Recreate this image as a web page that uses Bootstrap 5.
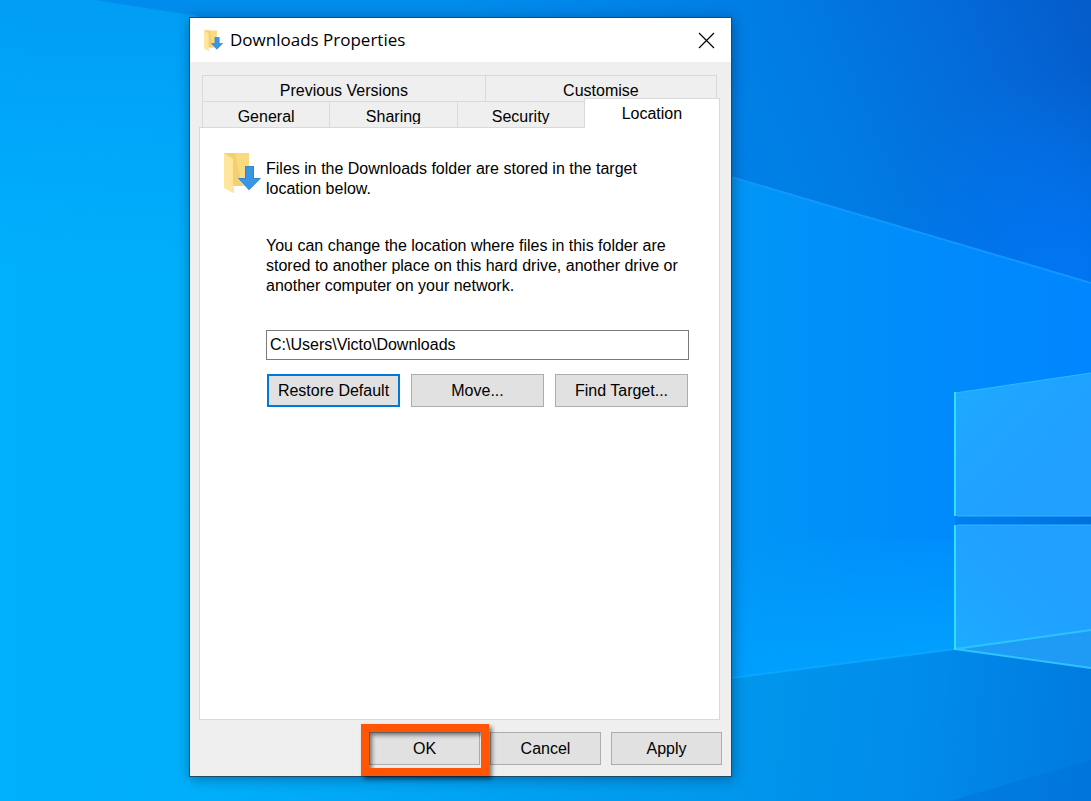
<!DOCTYPE html>
<html lang="en">
<head>
<meta charset="utf-8">
<meta name="viewport" content="width=device-width, initial-scale=1">
<title>Downloads Properties</title>
<link href="https://cdn.jsdelivr.net/npm/bootstrap@5.3.0/dist/css/bootstrap.min.css" rel="stylesheet">
<style>
  body { font-family: "Liberation Sans", Arial, sans-serif; font-size: 16px; line-height: 20px; color: #000; background: #00a8fb; }
  .desktop { padding: 17px 0 24px 189px; }
  .wallpaper { inset: 0; z-index: 0; }
  .dialog { z-index: 1; width: 100%; max-width: 543px; background: #efefef; border: 1px solid #1c4a68; box-shadow: 1px 2px 12px rgba(0,30,60,.42); }
  .titlebar { height: 44px; padding: 0 16px 0 14px; background: #fff; }
  .titlebar h1 { font-family: "Open Sans", "Noto Sans", sans-serif; font-size: 17px; line-height: 24px; margin-left: 7px; }
  .close-btn { line-height: 0; }
  .sheet { padding: 13px 11px 0 9px; }
  .tab-row { padding-left: 3px; }
  .tab-row.upper { padding-right: 3px; }
  .tab-btn { flex: 128 1 0; height: 26px; padding: 5px 0 0; background: #efefef; color: #000; border: solid #d9d9d9; border-width: 1px 0 0 1px; }
  .tab-btn.wide { flex-grow: 284; }
  .tab-btn.mid { flex-grow: 232; border-right-width: 1px; }
  .tab-btn span { height: 17px; overflow: hidden; }
  .tab-btn.active { flex-grow: 136; height: 30px; margin: -3px 0 -1px; background: #fff; border-right-width: 1px; z-index: 1; }
  .pane { padding: 24px 30px 24px 24px; background: #fff; border: 1px solid #d9d9d9; }
  .copy { padding-top: 7px; margin-left: 5px; }
  .copy .intro { margin-bottom: 37px; }
  .copy .note { margin-bottom: 34px; }
  .path-box { height: 30px; padding: 0 3px; font-size: 16px; line-height: 20px; color: #000; border: 1px solid #7a7a7a; border-radius: 0; }
  .path-actions { gap: 11px; margin: 14px 1px 0; }
  .win-btn { --bs-btn-font-size: 16px; --bs-btn-line-height: 20px; --bs-btn-padding-x: 0; --bs-btn-padding-y: 0; --bs-btn-border-radius: 0; --bs-btn-color: #000; --bs-btn-bg: #e1e1e1; --bs-btn-border-color: #adadad; --bs-btn-hover-color: #000; --bs-btn-hover-bg: #e5f1fb; --bs-btn-hover-border-color: #0078d7; height: 33px; }
  .win-btn.focused { border-color: #0078d7; box-shadow: inset 0 0 0 1px #0078d7; }
  .actions { padding: 12px 9px 11px; gap: 10px; }
  .actions .win-btn { width: 111px; }
  .marker { inset: -8px -9px -11px -8px; border: 8px solid #ff5504; filter: drop-shadow(3px 3px 2px rgba(0,0,0,.5)); pointer-events: none; }
</style>
</head>
<body>
<main class="desktop position-relative d-flex min-vh-100 overflow-hidden">
  <svg class="wallpaper position-absolute w-100 h-100" viewBox="0 0 1091 801" preserveAspectRatio="xMaxYMid slice" aria-hidden="true">
    <defs>
      <linearGradient id="base" x1="0" y1="500" x2="1091" y2="500" gradientUnits="userSpaceOnUse">
        <stop offset="0" stop-color="#00b0fc"/><stop offset=".2" stop-color="#00affb"/><stop offset=".67" stop-color="#0096f6"/><stop offset=".86" stop-color="#008bfc"/><stop offset="1" stop-color="#0086ff"/>
      </linearGradient>
      <linearGradient id="shade" x1="0" y1="0" x2="0" y2="260" gradientUnits="userSpaceOnUse">
        <stop offset="0" stop-color="#0094f2" stop-opacity=".65"/><stop offset="1" stop-color="#0094f8" stop-opacity="0"/>
      </linearGradient>
      <linearGradient id="sky" x1="560" y1="240" x2="1091" y2="20" gradientUnits="userSpaceOnUse">
        <stop offset="0" stop-color="#008cec"/><stop offset=".5" stop-color="#007ce4"/><stop offset=".8" stop-color="#0469d9"/><stop offset="1" stop-color="#045cca"/>
      </linearGradient>
      <radialGradient id="skyglow" cx="1070" cy="270" r="200" gradientUnits="userSpaceOnUse">
        <stop offset="0" stop-color="#0078f8" stop-opacity=".85"/><stop offset="1" stop-color="#0078f8" stop-opacity="0"/>
      </radialGradient>
      <linearGradient id="glow" x1="740" y1="540" x2="758" y2="678" gradientUnits="userSpaceOnUse">
        <stop offset="0" stop-color="#00a0ff" stop-opacity="0"/><stop offset="1" stop-color="#00a0ff"/>
      </linearGradient>
      <linearGradient id="floor" x1="190" y1="700" x2="1091" y2="790" gradientUnits="userSpaceOnUse">
        <stop offset="0" stop-color="#00b0fb"/><stop offset=".6" stop-color="#0097ec"/><stop offset=".8" stop-color="#008ceb"/><stop offset="1" stop-color="#007adf"/>
      </linearGradient>
      <linearGradient id="pane" x1="0" y1="0" x2="1" y2="1">
        <stop offset="0" stop-color="#1eabff"/><stop offset=".6" stop-color="#20a0ff"/><stop offset="1" stop-color="#229fff"/>
      </linearGradient>
      <linearGradient id="pane2" x1="0" y1="1" x2="1" y2="0">
        <stop offset="0" stop-color="#1cadff"/><stop offset=".6" stop-color="#20a0ff"/><stop offset="1" stop-color="#229fff"/>
      </linearGradient>
      <linearGradient id="gapdark" x1="800" y1="0" x2="1091" y2="0" gradientUnits="userSpaceOnUse">
        <stop offset="0" stop-color="#007ff0" stop-opacity="0"/><stop offset=".55" stop-color="#007ff0"/><stop offset="1" stop-color="#0070e0"/>
      </linearGradient>
    </defs>
    <rect width="1091" height="801" fill="url(#base)"/>
    <rect width="731" height="260" fill="url(#shade)"/>
    <path d="M95 0 190 15 731 177 1091 283V0Z" fill="url(#sky)"/>
    <path d="M731 0V177L1091 283V0Z" fill="url(#skyglow)"/>
    <path d="M190 15 731 177 1091 283" fill="none" stroke="#1296ff" stroke-width="2"/>
    <path d="M560 540H955V649L560 700Z" fill="url(#glow)"/>
    <path d="M190 740 731 678 955 649 1091 668V801H190Z" fill="url(#floor)"/>
    <path d="M731 678 955 649" stroke="#08a6ff" stroke-width="2"/>
    <path d="M950 801 1091 760V801Z" fill="#0073d8" opacity=".55"/>
    <path d="M955 516H1091V525H955Z" fill="url(#gapdark)"/>
    <path d="M955 393 1091 373V516H955Z" fill="url(#pane)"/>
    <path d="M955 525H1091V668L955 649Z" fill="url(#pane2)"/>
    <path d="M955 649 1091 630V668Z" fill="#1f9bf6"/>
    <path d="M955 393 1091 373M957 516H1091M957 525H1091" fill="none" stroke="#2cb9ff"/>
    <path d="M955 649 1091 630M955 649 1091 668" fill="none" stroke="#2cc4ff" stroke-width="2"/>
    <path d="M955 392V516M955 525V650" stroke="#30e0ff" stroke-width="2"/>
  </svg>

  <section class="dialog position-relative d-flex flex-column" role="dialog" aria-labelledby="dlg-title">
    <header class="titlebar d-flex align-items-center">
      <svg width="19" height="21" viewBox="0 0 37 41" aria-hidden="true"><use href="#folder"/></svg>
      <h1 id="dlg-title" class="fw-normal mb-0">Downloads Properties</h1>
      <button type="button" class="close-btn btn p-0 border-0 ms-auto" aria-label="Close">
        <svg width="17" height="17" viewBox="0 0 17 17" aria-hidden="true"><path d="M1 1 16 16M16 1 1 16" stroke="#000" stroke-width="1.2"/></svg>
      </button>
    </header>

    <div class="sheet d-flex flex-column flex-grow-1">
      <div role="tablist" aria-label="Property pages">
        <div class="tab-row upper d-flex" role="presentation">
          <button type="button" role="tab" aria-selected="false" class="tab-btn wide d-flex align-items-start justify-content-center"><span>Previous Versions</span></button>
          <button type="button" role="tab" aria-selected="false" class="tab-btn mid d-flex align-items-start justify-content-center"><span>Customise</span></button>
        </div>
        <div class="tab-row d-flex" role="presentation">
          <button type="button" role="tab" aria-selected="false" class="tab-btn d-flex align-items-start justify-content-center"><span>General</span></button>
          <button type="button" role="tab" aria-selected="false" class="tab-btn d-flex align-items-start justify-content-center"><span>Sharing</span></button>
          <button type="button" role="tab" aria-selected="false" class="tab-btn d-flex align-items-start justify-content-center"><span>Security</span></button>
          <button type="button" role="tab" aria-selected="true" id="tab-location" aria-controls="pane-location" class="tab-btn active position-relative d-flex align-items-start justify-content-center"><span>Location</span></button>
        </div>
      </div>

      <div id="pane-location" class="pane d-flex align-items-start flex-grow-1" role="tabpanel" aria-labelledby="tab-location">
        <svg class="flex-shrink-0" width="37" height="41" viewBox="0 0 37 41" aria-hidden="true">
          <g id="folder">
            <path d="M0 1H25V34H8Z" fill="#f9da7c"/>
            <path d="M0 1H11L18 34H8Z" fill="#f3d070"/>
            <path d="M0 1 9 7V41L0 36Z" fill="#ffe69c"/>
            <path d="M7 39 10 35V41Z" fill="#f3e3bd"/>
            <path d="M21 14H30V26H37L25 38 14 26H21Z" fill="#3a96e4"/>
            <path d="M21.500 14.500H29.500V26.500H36L25 37.500 15 26.500H21.500Z" fill="none" stroke="#2f86d2"/>
          </g>
        </svg>
        <form class="copy flex-grow-1">
          <p class="intro">Files in the Downloads folder are stored in the target location below.</p>
          <label for="path" class="note d-block">You can change the location where files in this folder are stored to another place on this hard drive, another drive or another computer on your network.</label>
          <input id="path" type="text" class="path-box form-control" value="C:\Users\Victo\Downloads" spellcheck="false">
          <div class="path-actions d-flex">
            <button type="button" class="win-btn btn focused col">Restore Default</button>
            <button type="button" class="win-btn btn col">Move...</button>
            <button type="button" class="win-btn btn col">Find Target...</button>
          </div>
        </form>
      </div>
    </div>

    <footer class="actions d-flex justify-content-end">
      <div class="position-relative">
        <button type="button" class="win-btn btn">OK</button>
        <div class="marker position-absolute"></div>
      </div>
      <button type="button" class="win-btn btn">Cancel</button>
      <button type="button" class="win-btn btn">Apply</button>
    </footer>
  </section>
</main>
<script src="https://cdn.jsdelivr.net/npm/bootstrap@5.3.0/dist/js/bootstrap.bundle.min.js"></script>
</body>
</html>
